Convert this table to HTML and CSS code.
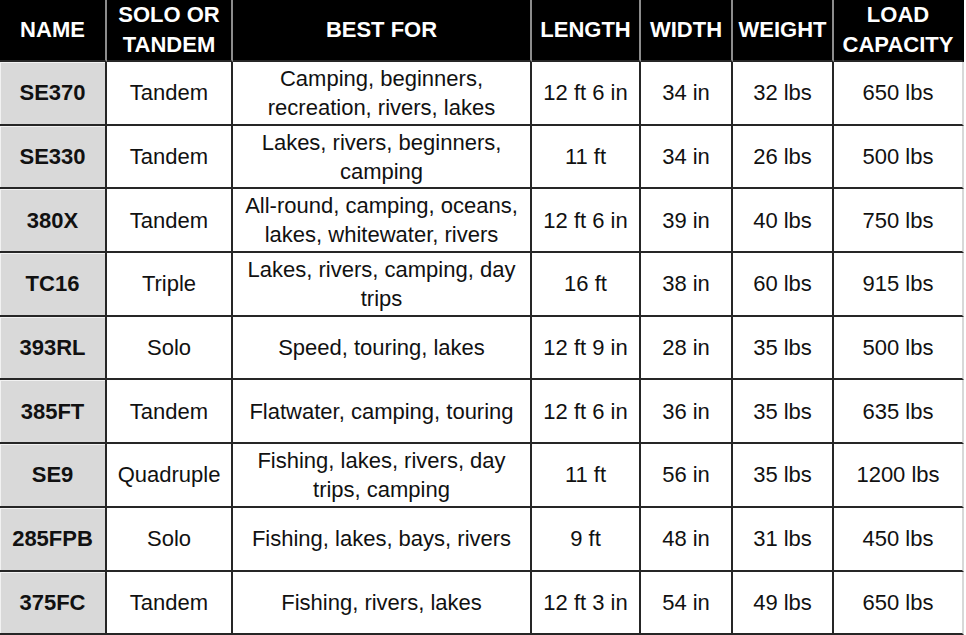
FILE: index.html
```html
<!DOCTYPE html>
<html>
<head>
<meta charset="utf-8">
<link rel="stylesheet" href="styles.css">
</head>
<body>
<table class="kayaks">
  <colgroup>
    <col class="c-name"><col class="c-solo"><col class="c-best"><col class="c-len"><col class="c-wid"><col class="c-wt"><col class="c-load">
  </colgroup>
  <thead>
    <tr>
      <th>NAME</th><th>SOLO OR<br>TANDEM</th><th>BEST FOR</th><th>LENGTH</th><th>WIDTH</th><th>WEIGHT</th><th>LOAD<br>CAPACITY</th>
    </tr>
  </thead>
  <tbody>
    <tr><td class="name">SE370</td><td>Tandem</td><td>Camping, beginners,<br>recreation, rivers, lakes</td><td>12 ft 6 in</td><td>34 in</td><td>32 lbs</td><td>650 lbs</td></tr>
    <tr><td class="name">SE330</td><td>Tandem</td><td>Lakes, rivers, beginners,<br>camping</td><td>11 ft</td><td>34 in</td><td>26 lbs</td><td>500 lbs</td></tr>
    <tr><td class="name">380X</td><td>Tandem</td><td>All-round, camping, oceans,<br>lakes, whitewater, rivers</td><td>12 ft 6 in</td><td>39 in</td><td>40 lbs</td><td>750 lbs</td></tr>
    <tr><td class="name">TC16</td><td>Triple</td><td>Lakes, rivers, camping, day<br>trips</td><td>16 ft</td><td>38 in</td><td>60 lbs</td><td>915 lbs</td></tr>
    <tr><td class="name">393RL</td><td>Solo</td><td>Speed, touring, lakes</td><td>12 ft 9 in</td><td>28 in</td><td>35 lbs</td><td>500 lbs</td></tr>
    <tr><td class="name">385FT</td><td>Tandem</td><td>Flatwater, camping, touring</td><td>12 ft 6 in</td><td>36 in</td><td>35 lbs</td><td>635 lbs</td></tr>
    <tr><td class="name">SE9</td><td>Quadruple</td><td>Fishing, lakes, rivers, day<br>trips, camping</td><td>11 ft</td><td>56 in</td><td>35 lbs</td><td>1200 lbs</td></tr>
    <tr><td class="name">285FPB</td><td>Solo</td><td>Fishing, lakes, bays, rivers</td><td>9 ft</td><td>48 in</td><td>31 lbs</td><td>450 lbs</td></tr>
    <tr><td class="name">375FC</td><td>Tandem</td><td>Fishing, rivers, lakes</td><td>12 ft 3 in</td><td>54 in</td><td>49 lbs</td><td>650 lbs</td></tr>
  </tbody>
</table>
</body>
</html>
```
FILE: styles.css
```css
html, body {
  margin: 0;
  padding: 0;
  background: #ffffff;
}

.kayaks {
  table-layout: fixed;
  width: 964px;
  border-collapse: separate;
  border-spacing: 0;
  font-family: "Liberation Sans", Arial, sans-serif;
  font-size: 22px;
  line-height: 29px;
  color: #111111;
}

.c-name { width: 107px; }
.c-solo { width: 126px; }
.c-best { width: 299px; }
.c-len  { width: 109px; }
.c-wid  { width: 92px; }
.c-wt   { width: 101px; }
.c-load { width: 130px; }

.kayaks th,
.kayaks td {
  box-sizing: border-box;
  padding: 0;
  text-align: center;
  vertical-align: middle;
  white-space: nowrap;
}

.kayaks th {
  height: 60px;
  background: #000000;
  color: #ffffff;
  font-weight: bold;
  line-height: 30px;
  border-right: 2px solid #8c8c8c;
  border-bottom: 2px solid #262626;
}

.kayaks th:last-child {
  border-right: 2px solid #000000;
}

.kayaks td {
  height: 63.7px;
  background: #ffffff;
  border-right: 2px solid #262626;
  border-bottom: 2px solid #262626;
}

.kayaks td:last-child {
  border-right: 2px solid #d8d8d8;
}

.kayaks td.name {
  background: #d9d9d9;
  font-weight: bold;
  box-shadow: inset 1px 1px 0 #f2f2f2;
}
```
